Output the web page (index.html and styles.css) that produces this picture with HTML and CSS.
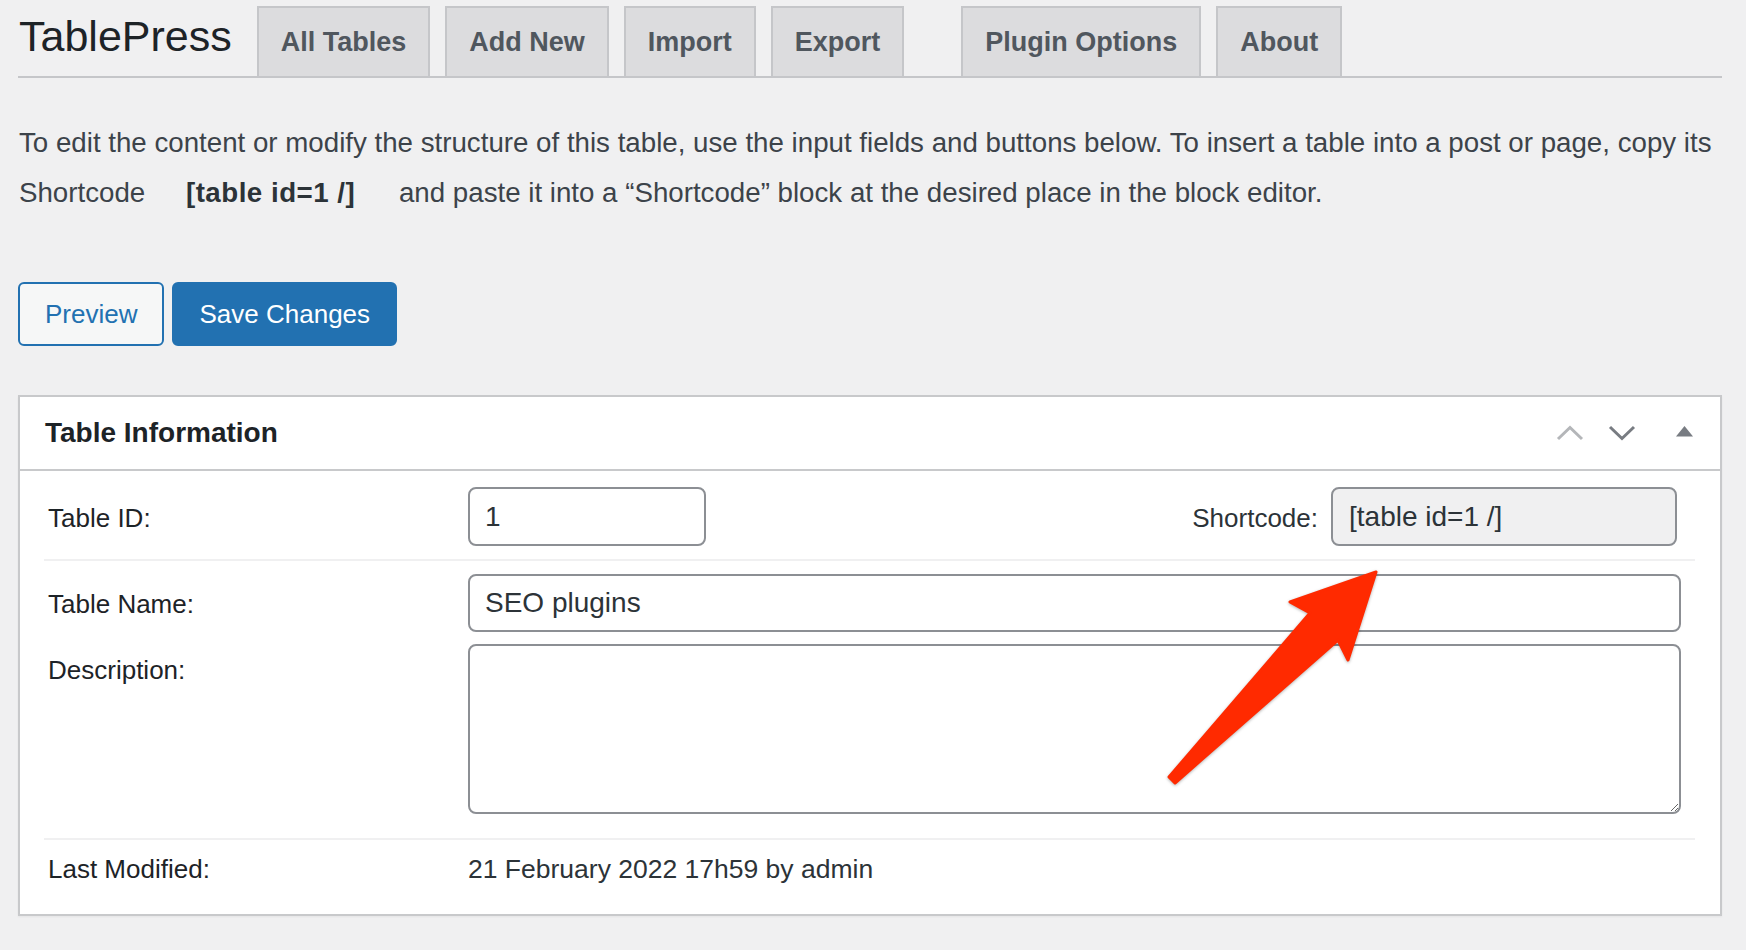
FILE: index.html
```html
<!DOCTYPE html>
<html lang="en">
<head>
<meta charset="utf-8">
<title>TablePress – Edit Table</title>
<link rel="stylesheet" href="styles.css">
</head>
<body>
<div class="wrap">
  <div class="header">
    <h1 class="title">TablePress</h1>
    <nav class="tabs">
      <a class="tab">All Tables</a>
      <a class="tab">Add New</a>
      <a class="tab">Import</a>
      <a class="tab">Export</a>
      <a class="tab tab-spaced">Plugin Options</a>
      <a class="tab">About</a>
    </nav>
  </div>

  <p class="intro">To edit the content or modify the structure of this table, use the input fields and buttons below. To insert a table into a post or page, copy its Shortcode <span class="sc-inline">[table id=1 /]</span> and paste it into a “Shortcode” block at the desired place in the block editor.</p>

  <div class="actions">
    <button class="btn btn-secondary">Preview</button>
    <button class="btn btn-primary">Save Changes</button>
  </div>

  <div class="postbox">
    <div class="pb-header">
      <h2 class="pb-title">Table Information</h2>
      <div class="handles">
        <svg class="h-up" width="28" height="16" viewBox="0 0 28 16"><polyline points="2,14 14,2.5 26,14" fill="none" stroke="#b4b6b9" stroke-width="3"/></svg>
        <svg class="h-down" width="28" height="16" viewBox="0 0 28 16"><polyline points="2,2 14,13.5 26,2" fill="none" stroke="#787c82" stroke-width="3"/></svg>
        <svg class="h-toggle" width="17" height="11" viewBox="0 0 17 11"><polygon points="0,10.5 8.5,0 17,10.5" fill="#787c82"/></svg>
      </div>
    </div>
    <div class="pb-body">
      <div class="row row-id">
        <label class="label">Table ID:</label>
        <input class="field field-id" type="text" value="1">
        <label class="sc-label">Shortcode:</label>
        <input class="field field-sc" type="text" value="[table id=1 /]" readonly>
      </div>
      <div class="row row-name">
        <label class="label">Table Name:</label>
        <input class="field field-name" type="text" value="SEO plugins">
      </div>
      <div class="row row-desc">
        <label class="label label-top">Description:</label>
        <textarea class="field field-desc"></textarea>
      </div>
      <div class="row row-mod">
        <span class="label">Last Modified:</span>
        <span class="value">21 February 2022 17h59 by admin</span>
      </div>
    </div>
  </div>
</div>

<svg class="annotation" width="230" height="230" viewBox="0 0 230 230">
  <polygon points="216,12 130,42 150,53 9,217 15,223 178,80 188,100" fill="#ff2a00" stroke="#ff2a00" stroke-width="3" stroke-linejoin="round"/>
</svg>
</body>
</html>
```

FILE: styles.css
```css
* { box-sizing: border-box; }

body {
  margin: 0;
  background: #f0f0f1;
  font-family: "Liberation Sans", Arial, sans-serif;
  color: #3c434a;
  position: relative;
  min-height: 950px;
}

.wrap {
  padding: 0 24px 0 18px;
}

/* Header + tabs */
.header {
  display: flex;
  align-items: baseline;
  padding-top: 6px;
  border-bottom: 2px solid #c5c6c9;
}

.title {
  margin: 0 25px 0 1px;
  font-size: 43px;
  line-height: 1;
  font-weight: 400;
  color: #1d2327;
}

.tabs {
  display: flex;
  align-items: baseline;
}

.tab {
  display: block;
  margin-left: 15px;
  padding: 0 22px;
  line-height: 68px;
  font-size: 27px;
  font-weight: 700;
  color: #50575e;
  background: #dcdcde;
  border: 2px solid #c5c6c9;
  border-bottom: 0;
}

.tab:first-child { margin-left: 0; }
.tab.tab-spaced { margin-left: 57px; }

/* Intro */
.intro {
  margin: 40px 0 0 1px;
  font-size: 27.7px;
  line-height: 50px;
  color: #3c434a;
}

.sc-inline {
  font-weight: 700;
  letter-spacing: 0.5px;
  color: #2c3338;
  margin: 0 36px 0 33px;
}

/* Buttons */
.actions {
  display: flex;
  gap: 8px;
  margin-top: 64px;
}

.btn {
  font-family: "Liberation Sans", Arial, sans-serif;
  font-size: 26px;
  line-height: 60px;
  padding: 0 25px;
  border: 2px solid #2271b1;
  border-radius: 6px;
  cursor: pointer;
}

.btn-secondary {
  background: #f6f7f7;
  color: #2271b1;
}

.btn-primary {
  background: #2271b1;
  color: #fff;
}

/* Postbox */
.postbox {
  margin-top: 49px;
  background: #fff;
  border: 2px solid #c8c9cb;
  box-shadow: 0 1px 2px rgba(0, 0, 0, 0.05);
}

.pb-header {
  display: flex;
  align-items: center;
  height: 74px;
  padding: 0 27px 0 25px;
  border-bottom: 2px solid #c8c9cb;
}

.pb-title {
  flex: 1;
  margin: 0;
  font-size: 28px;
  font-weight: 700;
  color: #1d2327;
}

.handles {
  display: flex;
  align-items: center;
}

.h-down { margin-left: 24px; }
.h-toggle { margin-left: 40px; margin-bottom: 3px; }

.pb-body {
  padding: 0 25px 0 24px;
}

.row {
  display: flex;
  align-items: center;
}

.label {
  flex: none;
  width: 424px;
  padding-left: 4px;
  font-size: 26px;
  line-height: 29px;
  color: #1d2327;
}

.field {
  font-family: "Liberation Sans", Arial, sans-serif;
  font-size: 28px;
  color: #2c3338;
  background: #fff;
  border: 2px solid #8c8f94;
  border-radius: 8px;
  padding: 0 15px;
  outline: none;
}

.row-id {
  padding: 16px 0 13px;
  border-bottom: 2px solid #f0f0f1;
}

.row-id .label,
.row-id .sc-label {
  padding-top: 4px;
}

.field-id {
  width: 238px;
  height: 59px;
}

.sc-label {
  margin-left: auto;
  margin-right: 13px;
  font-size: 26px;
  color: #2c3338;
}

.field-sc {
  width: 346px;
  height: 59px;
  margin-right: 18px;
  padding-left: 16px;
  background: #f0f0f1;
}

.row-name {
  padding-top: 13px;
}

.row-name .label {
  padding-top: 3px;
}

.field-name {
  flex: 1;
  height: 58px;
  margin-right: 14px;
}

.row-desc {
  align-items: flex-start;
  padding: 12px 0 24px;
  border-bottom: 2px solid #f0f0f1;
}

.label-top {
  padding-top: 12px;
}

.field-desc {
  flex: 1;
  height: 170px;
  margin-right: 14px;
  resize: vertical;
}

.row-mod {
  padding: 15px 0 30px;
}

.value {
  font-size: 26.5px;
  line-height: 29px;
  color: #2c3338;
}

/* Red annotation arrow overlaying the form */
.annotation {
  position: absolute;
  left: 1160px;
  top: 560px;
  pointer-events: none;
  filter: drop-shadow(0 1px 1.5px rgba(0, 0, 0, 0.3));
}
```
